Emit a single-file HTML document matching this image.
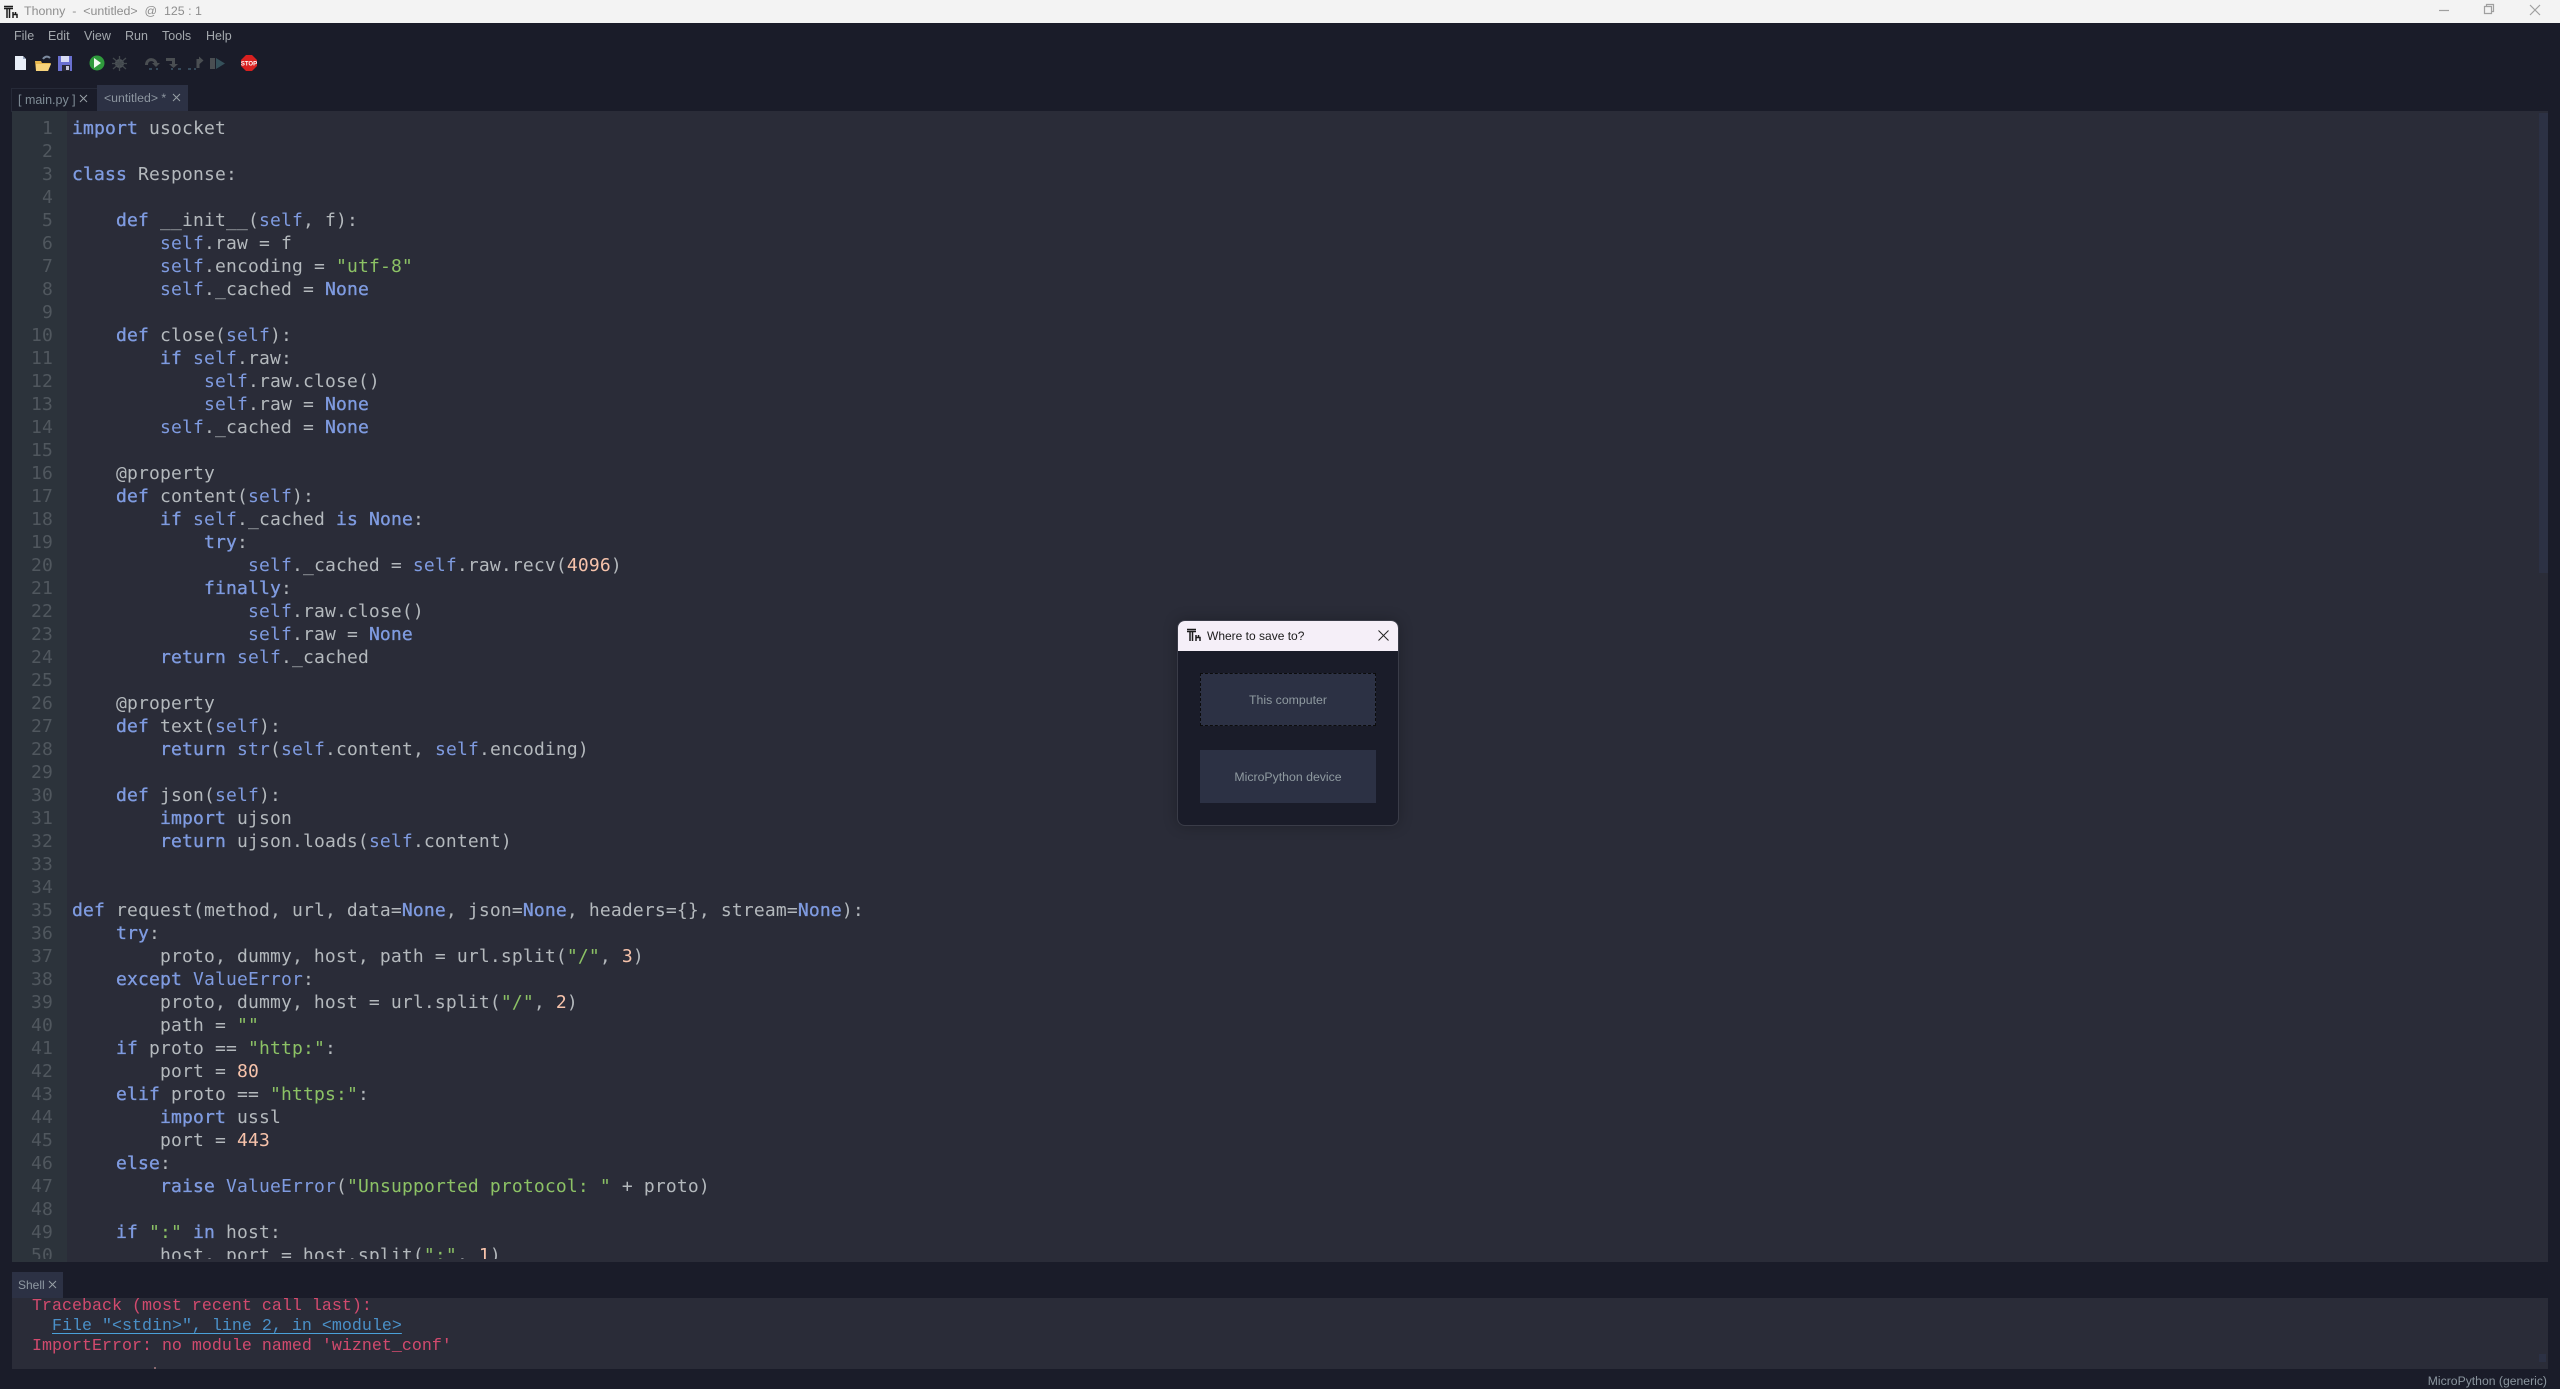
<!DOCTYPE html>
<html><head><meta charset="utf-8"><title>Thonny</title>
<style>
html,body{margin:0;padding:0;background:#1a1c29;width:2560px;height:1389px;overflow:hidden}
div,pre{position:absolute;margin:0}
.ui{font-family:"Liberation Sans",sans-serif;white-space:pre}
#code,#nums{font-family:"DejaVu Sans Mono",monospace;font-size:18px;letter-spacing:.16px;line-height:23px;top:6px}
#code{left:60px;color:#b4b9bd}
#nums{left:0;width:41px;text-align:right;color:#50575e}
#code b{color:#7f9be0;font-weight:400;-webkit-text-stroke:.35px #7f9be0}
#code i{color:#7f9be0;font-style:normal}
#code u{color:#8cc265;text-decoration:none}
#code s{color:#f7c3ab;text-decoration:none}
#shell{font-family:"Liberation Mono",monospace;font-size:16.67px;line-height:20px;left:20px;top:-1px;color:#d24a6e}
#shell a{color:#4a90c8;text-decoration:underline;text-underline-offset:3px;text-decoration-color:#4aa0d8}
svg{position:absolute;overflow:visible}
</style></head><body>

<div style="left:0;top:0;width:2560px;height:23px;background:#f3f3f3"></div>
<svg style="left:3px;top:5px" width="16" height="15" viewBox="0 0 16 15"><path d="M1 1.500H10M1 3.500H10M4 3.500V13M6.500 3.500V13M10 7V13M10 9.500H14V13M12.500 9.500V7" fill="none" stroke="#1c1c1c" stroke-width="1.500"/></svg>
<div class="ui" style="left:24px;top:4px;font-size:12.400px;line-height:15px;color:#8e8e8e">Thonny  -  &lt;untitled&gt;  @  125 : 1</div>
<svg style="left:2439px;top:4px" width="110" height="16" viewBox="0 0 110 16"><path d="M0 6.500H10" stroke="#a0a0a0" stroke-width="1.200"/><path d="M45.500 2.500h7v7h-7zM47.500 2.500V.500h7v7h-2" fill="none" stroke="#a0a0a0" stroke-width="1.200"/><path d="M91 1L101 11M101 1L91 11" stroke="#a0a0a0" stroke-width="1.200"/></svg>

<div class="ui" style="left:14px;top:29px;font-size:12.500px;line-height:15px;color:#a3a8ad">File</div>
<div class="ui" style="left:48px;top:29px;font-size:12.500px;line-height:15px;color:#a3a8ad">Edit</div>
<div class="ui" style="left:84px;top:29px;font-size:12.500px;line-height:15px;color:#a3a8ad">View</div>
<div class="ui" style="left:125px;top:29px;font-size:12.500px;line-height:15px;color:#a3a8ad">Run</div>
<div class="ui" style="left:162px;top:29px;font-size:12.500px;line-height:15px;color:#a3a8ad">Tools</div>
<div class="ui" style="left:206px;top:29px;font-size:12.500px;line-height:15px;color:#a3a8ad">Help</div>

<svg style="left:0;top:50px" width="270" height="30" viewBox="0 0 270 30">
<path d="M15 6h8l3 3v11H15z" fill="#e8eef8"/><path d="M23 6l3 3h-3z" fill="#9aa8c0"/>
<path d="M35 11h6l1 2h9l-3 8H36z" fill="#e8b84e"/><path d="M36 14h15l-3 7H36z" fill="#f6d37c"/><path d="M43 9c2-3 5-3 7-1" fill="none" stroke="#7d8ba0" stroke-width="2"/>
<path d="M58 6h14v15H58z" fill="#6a70d0"/><path d="M61 6h8v6h-8z" fill="#d8dcf4"/><path d="M62 15h8v6h-8z" fill="#2a2a38"/><path d="M66 16h3v4h-3z" fill="#c8c8d8"/>
<circle cx="97" cy="13" r="7.500" fill="#2f9a3c"/><path d="M94 8l7 5-7 5z" fill="#f2fbf2"/>
<circle cx="119.500" cy="13.500" r="4.500" fill="#4d5358"/><path d="M113 8l13 11M113 19l13-11M119.500 6v15M112 13.500h15" stroke="#43494e" stroke-width="1.300"/>
<path d="M146.500 15c0-7 9-7 9.500-1" fill="none" stroke="#4a4e52" stroke-width="3"/><path d="M152 13h8l-4 4z" fill="#4a4e52"/><path d="M149 19h3M156 19h2" stroke="#35495a" stroke-width="2"/>
<path d="M166 9.500h7.500v6" fill="none" stroke="#4a4e52" stroke-width="3"/><path d="M169 14h9l-4.500 4z" fill="#4a4e52"/><path d="M171 19h2M178 19h3" stroke="#35495a" stroke-width="2"/>
<path d="M198 18v-7.500h3" fill="none" stroke="#4a4e52" stroke-width="3"/><path d="M199 6.500v8l4.500-4z" fill="#4a4e52"/><path d="M188 19h3M194 19h2" stroke="#35495a" stroke-width="2"/>
<path d="M210 8h5v11h-5z" fill="#4a4e52"/><path d="M216 8l9 5.500-9 5.500z" fill="#35505a"/>
<path d="M246 5h6l5 5v6l-5 5h-6l-5-5v-6z" fill="#d9201f"/><text x="249" y="15.500" text-anchor="middle" font-family="Liberation Sans,sans-serif" font-size="6" font-weight="700" fill="#fff">STOP</text>
</svg>

<div style="left:11px;top:88px;width:85px;height:23px;border:1px solid #262a38;border-bottom:0"></div>
<div class="ui" style="left:18px;top:92px;font-size:12.500px;line-height:16px;color:#7f8c96">[ main.py ]</div>
<svg style="left:79px;top:94px" width="9" height="9"><path d="M1 1L8 8M8 1L1 8" stroke="#98a0a6" stroke-width="1"/></svg>
<div style="left:97px;top:85px;width:91px;height:26px;background:#2c3144"></div>
<div class="ui" style="left:104px;top:90px;font-size:12.300px;line-height:16px;color:#8d96a0">&lt;untitled&gt; *</div>
<svg style="left:172px;top:93px" width="9" height="9"><path d="M1 1L8 8M8 1L1 8" stroke="#98a0a6" stroke-width="1"/></svg>

<div style="left:12px;top:111px;width:2536px;height:1151px;background:#2a2c38;overflow:hidden">
<div style="left:0;top:0;width:55px;height:1151px;background:#2c333b"></div>
<div style="left:0;top:0;width:2536px;height:1148px;overflow:hidden">
<pre id="nums">1
2
3
4
5
6
7
8
9
10
11
12
13
14
15
16
17
18
19
20
21
22
23
24
25
26
27
28
29
30
31
32
33
34
35
36
37
38
39
40
41
42
43
44
45
46
47
48
49
50</pre>
<pre id="code"><b>import</b> usocket

<b>class</b> Response:

    <b>def</b> __init__(<i>self</i>, f):
        <i>self</i>.raw = f
        <i>self</i>.encoding = <u>"utf-8"</u>
        <i>self</i>._cached = <b>None</b>

    <b>def</b> close(<i>self</i>):
        <b>if</b> <i>self</i>.raw:
            <i>self</i>.raw.close()
            <i>self</i>.raw = <b>None</b>
        <i>self</i>._cached = <b>None</b>

    @property
    <b>def</b> content(<i>self</i>):
        <b>if</b> <i>self</i>._cached <b>is</b> <b>None</b>:
            <b>try</b>:
                <i>self</i>._cached = <i>self</i>.raw.recv(<s>4096</s>)
            <b>finally</b>:
                <i>self</i>.raw.close()
                <i>self</i>.raw = <b>None</b>
        <b>return</b> <i>self</i>._cached

    @property
    <b>def</b> text(<i>self</i>):
        <b>return</b> <i>str</i>(<i>self</i>.content, <i>self</i>.encoding)

    <b>def</b> json(<i>self</i>):
        <b>import</b> ujson
        <b>return</b> ujson.loads(<i>self</i>.content)


<b>def</b> request(method, url, data=<b>None</b>, json=<b>None</b>, headers={}, stream=<b>None</b>):
    <b>try</b>:
        proto, dummy, host, path = url.split(<u>"/"</u>, <s>3</s>)
    <b>except</b> <i>ValueError</i>:
        proto, dummy, host = url.split(<u>"/"</u>, <s>2</s>)
        path = <u>""</u>
    <b>if</b> proto == <u>"http:"</u>:
        port = <s>80</s>
    <b>elif</b> proto == <u>"https:"</u>:
        <b>import</b> ussl
        port = <s>443</s>
    <b>else</b>:
        <b>raise</b> <i>ValueError</i>(<u>"Unsupported protocol: "</u> + proto)

    <b>if</b> <u>":"</u> <b>in</b> host:
        host, port = host.split(<u>":"</u>, <s>1</s>)</pre>
</div>
<div style="left:2527px;top:2px;width:9px;height:460px;background:#2c3144"></div>
</div>

<div style="left:12px;top:1272px;width:51px;height:26px;background:#2c3144"></div>
<div class="ui" style="left:18px;top:1277px;font-size:12px;line-height:16px;color:#8f99a2">Shell</div>
<svg style="left:48px;top:1280px" width="9" height="9"><path d="M1 1L8 8M8 1L1 8" stroke="#98a0a6" stroke-width="1"/></svg>

<div style="left:12px;top:1298px;width:2536px;height:71px;background:#2a2c38">
<pre id="shell">Traceback (most recent call last):
  <a>File "&lt;stdin&gt;", line 2, in &lt;module&gt;</a>
ImportError: no module named 'wiznet_conf'</pre>
<div style="left:142px;top:69px;width:2px;height:2px;background:#8a6a70"></div>
<div style="left:2527px;top:56px;width:7px;height:8px;background:#2c3144"></div>
</div>
<div class="ui" style="right:13px;top:1374px;font-size:12.200px;line-height:15px;color:#8a959e">MicroPython (generic)</div>

<div style="left:1177px;top:620px;width:222px;height:206px;background:#1a1c29;border:1px solid #3a3c48;border-radius:8px;box-sizing:border-box;overflow:hidden;box-shadow:0 0 14px rgba(0,0,0,.25)">
<div style="left:0;top:0;width:222px;height:30px;background:#f5eff8"></div>
<svg style="left:8px;top:7px" width="16" height="15" viewBox="0 0 16 15"><path d="M1 1.500H10M1 3.500H10M4 3.500V13M6.500 3.500V13M10 7V13M10 9.500H14V13M12.500 9.500V7" fill="none" stroke="#1c1c1c" stroke-width="1.500"/></svg>
<div class="ui" style="left:29px;top:7px;font-size:12px;line-height:16px;color:#1c1c1c">Where to save to?</div>
<svg style="left:200px;top:9px" width="11" height="11"><path d="M.5 .5L10.500 10.500M10.500 .5L.5 10.500" stroke="#222" stroke-width="1"/></svg>
<div class="ui" style="left:22px;top:52px;width:176px;height:53px;box-sizing:border-box;background:#2c3144;border:1px dashed #0c0c0c;text-align:center;font-size:12.300px;line-height:53px;color:#8f9aa0">This computer</div>
<div class="ui" style="left:22px;top:129px;width:176px;height:53px;background:#2c3144;text-align:center;font-size:12.300px;line-height:55px;color:#8f9aa0">MicroPython device</div>
</div>
</body></html>
